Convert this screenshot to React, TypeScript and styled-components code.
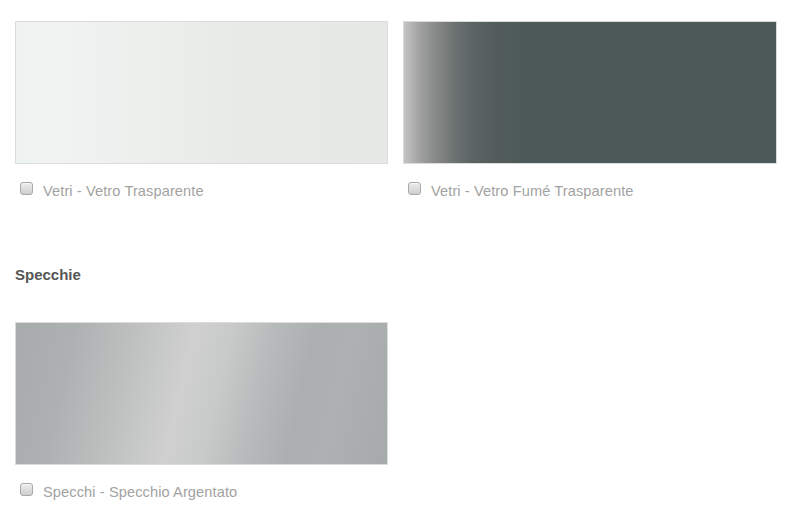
import styled, { createGlobalStyle } from 'styled-components';

const Global = createGlobalStyle`
  body {
    margin: 0;
    background: #fff;
    font-family: "Liberation Sans", Arial, sans-serif;
  }
`;

const Page = styled.div`
  padding: 21px 15px 0 15px;
  display: flex;
  flex-direction: column;
`;

const Grid = styled.div`
  display: grid;
  grid-template-columns: 373px 374px;
  column-gap: 15px;
`;

const Item = styled.div`
  display: flex;
  flex-direction: column;
`;

const Swatch = styled.div<{ $bg: string }>`
  height: 141px;
  border: 1px solid #dcdcdc;
  background: ${p => p.$bg};
`;

const Option = styled.label`
  display: flex;
  align-items: center;
  gap: 10px;
  margin: 19px 0 0 5px;
  height: 16px;
  font-size: 14.6px;
  letter-spacing: 0.1px;
  color: #a2a2a2;
`;

const Box = styled.span`
  width: 11px;
  height: 11px;
  border: 1px solid #a8a8a8;
  border-radius: 3px;
  background: linear-gradient(#ececec, #cfcfcf);
  box-shadow: inset 0 1px 0 #f6f6f6;
  margin-top: -5px;
`;

const Heading = styled.h3`
  margin: 67px 0 0 0;
  font-size: 15px;
  font-weight: bold;
  color: #565656;
  line-height: 18px;
`;

const Section = styled.div`
  margin-top: 38px;
`;

const clear = 'linear-gradient(90deg, #eef3f2 0%, #f0f3f1 12%, #ecefec 35%, #e8eae7 60%, #e6e8e5 100%)';
const fume = 'linear-gradient(90deg, #c4c4c4 0%, #a3a3a3 4%, #858787 9%, #6b7170 14%, #5a6362 19%, #515c5b 25%, #4e5a59 32%, #4e5a59 100%)';
const silver = 'linear-gradient(103deg, #a8abac 0%, #aeb1b2 15%, #bcbebe 28%, #c8c9c9 38%, #cfd0cf 45%, #c8caca 54%, #b8bbbb 64%, #acafb0 75%, #aeb1b2 84%, #a6aaab 100%)';

function Choice({ bg, label }: { bg: string; label: string }) {
  return (
    <Item>
      <Swatch $bg={bg} />
      <Option>
        <Box />
        {label}
      </Option>
    </Item>
  );
}

export default function App() {
  return (
    <>
      <Global />
      <Page>
        <Grid>
          <Choice bg={clear} label="Vetri - Vetro Trasparente" />
          <Choice bg={fume} label="Vetri - Vetro Fumé Trasparente" />
        </Grid>
        <Heading>Specchie</Heading>
        <Section>
          <Grid>
            <Choice bg={silver} label="Specchi - Specchio Argentato" />
          </Grid>
        </Section>
      </Page>
    </>
  );
}
